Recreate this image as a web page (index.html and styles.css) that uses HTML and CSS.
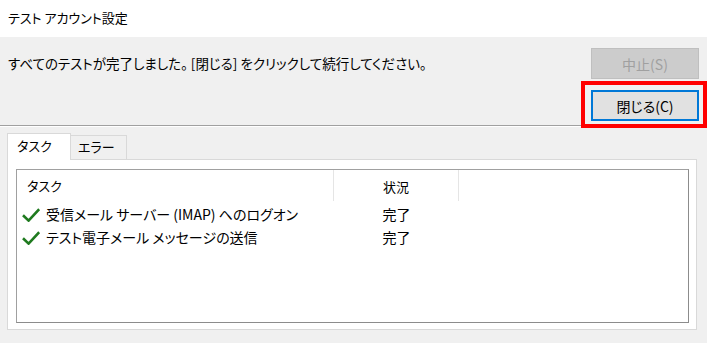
FILE: index.html
```html
<!DOCTYPE html>
<html lang="ja">
<head>
  <meta charset="UTF-8" />
  <title>テスト アカウント設定</title>
  <link rel="stylesheet" href="styles.css">
</head>
<body>
  <div class="titlebar">テスト アカウント設定</div>

  <div class="top">
    <p class="message">すべてのテストが完了しました。 [閉じる] をクリックして続行してください。</p>
    <div class="actions">
      <button class="btn" disabled>中止(S)</button>
      <div class="highlight">
        <button class="btn default">閉じる(C)</button>
      </div>
    </div>
  </div>
  <hr class="separator">

  <div class="tabs">
    <div class="tab active">タスク</div>
    <div class="tab">エラー</div>
  </div>

  <div class="panel">
    <div class="listview">
      <div class="row header">
        <div class="col task">タスク</div>
        <div class="col status">状況</div>
      </div>
      <div class="row">
        <div class="col task">
          <svg class="check" width="18" height="14" viewBox="0 0 18 14"><path d="M1 7.2 L6.6 12.6 L17.2 1.2" /></svg>
          受信メール サーバー (IMAP) へのログオン
        </div>
        <div class="col status">完了</div>
      </div>
      <div class="row">
        <div class="col task">
          <svg class="check" width="18" height="14" viewBox="0 0 18 14"><path d="M1 7.2 L6.6 12.6 L17.2 1.2" /></svg>
          テスト電子メール メッセージの送信
        </div>
        <div class="col status">完了</div>
      </div>
    </div>
  </div>
</body>
</html>
```

FILE: styles.css
```css
body {
  margin: 0;
  width: 707px;
  height: 343px;
  overflow: hidden;
  background: #f0f0f0;
  color: #000;
  font-family: "Noto Sans CJK JP", "Noto Sans", sans-serif;
  font-size: 13px;
  font-feature-settings: "palt";
}

.titlebar {
  height: 37px;
  line-height: 36px;
  padding-left: 8px;
  background: #fff;
}

.top {
  display: flex;
  justify-content: space-between;
  align-items: flex-start;
  height: 88px;
  padding: 11px 0 0 8px;
  box-sizing: border-box;
}

.message {
  margin: 0;
  line-height: 31px;
  font-size: 13.5px;
}

.actions {
  display: flex;
  flex-direction: column;
  align-items: flex-end;
  gap: 2px;
}

.btn {
  width: 108px;
  height: 31px;
  margin-right: 8px;
  box-sizing: border-box;
  font: inherit;
  font-size: 14px;
  color: #000;
  background: #e1e1e1;
  border: 1px solid #adadad;
  padding: 0;
}

.btn:disabled {
  color: #a0a0a0;
  background: #cccccc;
  border-color: #bfbfbf;
}

.btn.default {
  margin: 0;
  border: 2px solid #0078d7;
}

.highlight {
  position: relative;
  z-index: 1;
  border: 4px solid #f00;
  padding: 5px 4px 3px 6px;
}

.separator {
  margin: 0;
  height: 0;
  border: 0;
  border-top: 1px solid #a0a0a0;
  border-bottom: 1px solid #fff;
}

.tabs {
  display: flex;
  align-items: flex-end;
  padding: 6px 0 0 7px;
}

.tab {
  height: 24px;
  line-height: 22px;
  box-sizing: border-box;
  width: 57px;
  padding-left: 7px;
  margin-left: -1px;
  border: 1px solid #d9d9d9;
  border-bottom: none;
  background: #f0f0f0;
}

.tab.active {
  position: relative;
  z-index: 1;
  width: 64px;
  height: 27px;
  line-height: 24px;
  padding-left: 9px;
  margin: 0 0 -1px 0;
  background: #fff;
}

.panel {
  height: 171px;
  margin: 0 10px 0 7px;
  padding: 9px 7px 6px 8px;
  box-sizing: border-box;
  background: #fff;
  border: 1px solid #d9d9d9;
}

.listview {
  height: 154px;
  box-sizing: border-box;
  border: 1px solid #a0a0a0;
  border-right-color: #8c8c8c;
  border-bottom-color: #8c8c8c;
  background: #fff;
}

.row {
  display: flex;
  height: 23px;
  line-height: 23px;
  font-size: 14px;
}

.row.header {
  height: 33px;
  line-height: 33px;
  font-size: 13px;
}

.col {
  box-sizing: border-box;
  white-space: nowrap;
}

.col.task {
  width: 317px;
  padding-left: 5px;
  display: flex;
  align-items: center;
  gap: 6px;
}

.col.status {
  width: 125px;
  text-align: center;
}

.header .col {
  border-right: 1px solid #e5e5e5;
  height: 31px;
}

.header .col.task {
  padding-left: 10px;
}

.check path {
  fill: none;
  stroke: #1f7a1f;
  stroke-width: 2.6;
}
```
